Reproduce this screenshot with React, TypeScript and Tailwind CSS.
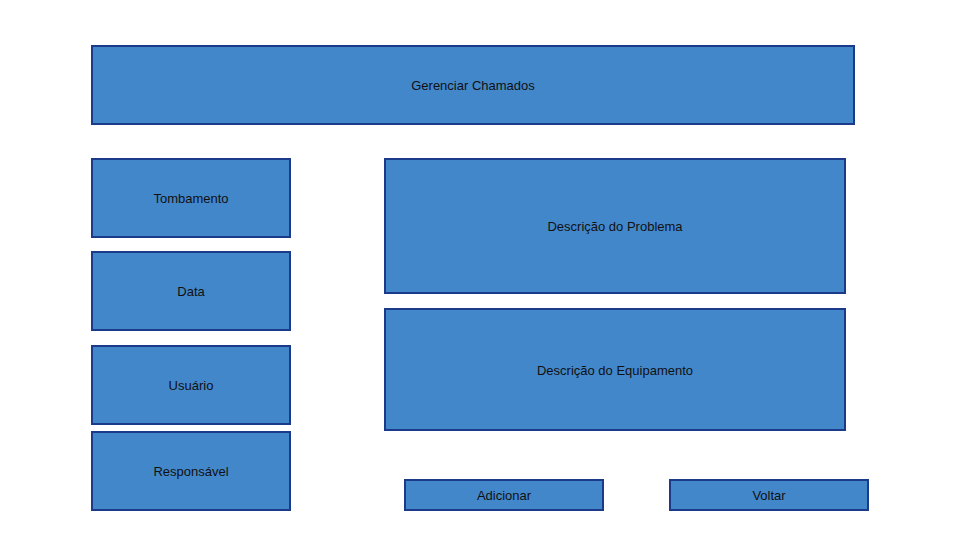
import React from "react";

function Box({ label, className }: { label: string; className: string }) {
    return (
        <div
            className={
                "flex items-center justify-center border-2 border-[#1b3a8a] bg-[#4387cb] pt-[1px] text-[13px] leading-none text-[#111]" +
                " " +
                className
            }
        >
            {label}
        </div>
    );
}

export default function App() {
    return (
        <div
            className="w-[977px] h-[542px] bg-white pt-[45px] pl-[91px]"
            style={{ fontFamily: '"Liberation Sans", Arial, sans-serif' }}
        >
            <Box label="Gerenciar Chamados" className="w-[764px] h-[80px]" />

            <div className="flex mt-[33px]">
                <div className="flex flex-col w-[200px]">
                    <Box label="Tombamento" className="h-[80px]" />
                    <Box label="Data" className="h-[80px] mt-[13px]" />
                    <Box label="Usuário" className="h-[80px] mt-[14px]" />
                    <Box label="Responsável" className="h-[80px] mt-[6px]" />
                </div>

                <div className="flex flex-col ml-[93px]">
                    <Box label="Descrição do Problema" className="w-[462px] h-[136px]" />
                    <Box label="Descrição do Equipamento" className="w-[462px] h-[123px] mt-[14px]" />
                    <div className="flex mt-[48px] ml-[20px] gap-[65px]">
                        <Box label="Adicionar" className="w-[200px] h-[32px]" />
                        <Box label="Voltar" className="w-[200px] h-[32px]" />
                    </div>
                </div>
            </div>
        </div>
    );
}
